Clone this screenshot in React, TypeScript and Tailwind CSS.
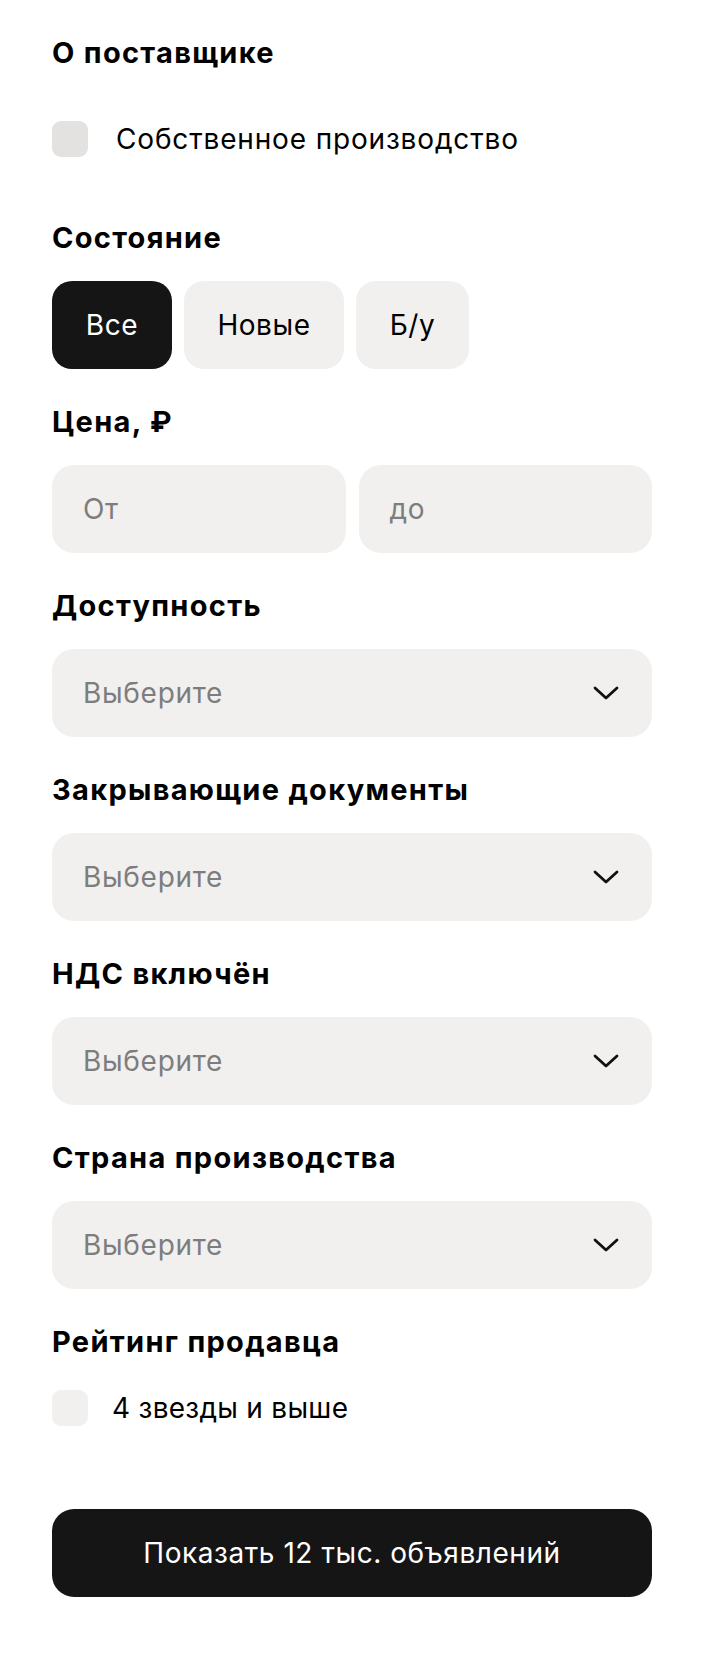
import React, { useState } from 'react'

const FONT = "font-['Inter',_'Liberation_Sans',_sans-serif]"

function Heading({ children }: { children: React.ReactNode }) {
  return (
    <h3 className="h-[32px] whitespace-nowrap text-[29px] font-bold leading-[32px] tracking-[0.045em] text-black">
      {children}
    </h3>
  )
}

function Chevron() {
  return (
    <svg width="26" height="14" viewBox="0 0 26 14" fill="none" aria-hidden="true">
      <path d="M2 2l11 10L24 2" stroke="#111" strokeWidth="2.8" strokeLinecap="round" strokeLinejoin="round" />
    </svg>
  )
}

// filter dropdowns all share the same closed state
function SelectBox() {
  return (
    <button
      type="button"
      className="flex h-[88px] w-full items-center justify-between rounded-[22px] bg-[#f1f0ee] pl-[31px] pr-[33px] text-left"
    >
      <span className="text-[28px] leading-none tracking-[0.025em] text-[#7d7d7d]">Выберите</span>
      <Chevron />
    </button>
  )
}

function Section({ title, children }: { title: string; children: React.ReactNode }) {
  return (
    <section className="flex flex-col gap-[27px]">
      <Heading>{title}</Heading>
      {children}
    </section>
  )
}

const conditions = [
  { label: 'Все', w: 'w-[120px]' },
  { label: 'Новые', w: 'w-[160px]' },
  { label: 'Б/у', w: 'w-[113px]' },
]

export default function App() {
  const [cond, setCond] = useState('Все')

  return (
    <div className={`${FONT} min-h-[1658px] w-[722px] bg-white pl-[52px] pt-[37px] text-black`}>
      <div className="flex w-[600px] flex-col">
        <Heading>О поставщике</Heading>

        <label className="mt-[52px] flex items-center gap-[28px]">
          <span className="h-[36px] w-[36px] rounded-[9px] bg-[#e3e2e0]" />
          <span className="text-[28px] leading-none tracking-[0.03em]">Собственное производство</span>
        </label>

        <div className="mt-[65px] flex flex-col gap-[37px]">
          <Section title="Состояние">
            <div className="flex gap-[12px]">
              {conditions.map((c) => (
                <button
                  key={c.label}
                  type="button"
                  onClick={() => setCond(c.label)}
                  className={
                    c.label === cond
                      ? `${c.w} h-[88px] rounded-[20px] bg-[#151515] text-[28px] tracking-[0.02em] text-white`
                      : `${c.w} h-[88px] rounded-[20px] bg-[#f1f0ee] text-[28px] tracking-[0.02em] text-black`
                  }
                >
                  {c.label}
                </button>
              ))}
            </div>
          </Section>

          <Section title="Цена, ₽">
            <div className="grid grid-cols-2 gap-[13px]">
              <div className="flex h-[88px] items-center rounded-[22px] bg-[#f1f0ee] pl-[31px] text-[28px] tracking-[0.02em] text-[#7d7d7d]">
                От
              </div>
              <div className="flex h-[88px] items-center rounded-[22px] bg-[#f1f0ee] pl-[31px] text-[28px] tracking-[0.02em] text-[#7d7d7d]">
                до
              </div>
            </div>
          </Section>

          <Section title="Доступность">
            <SelectBox />
          </Section>

          <Section title="Закрывающие документы">
            <SelectBox />
          </Section>

          <Section title="НДС включён">
            <SelectBox />
          </Section>

          <Section title="Страна производства">
            <SelectBox />
          </Section>

          <section className="flex flex-col">
            <Heading>Рейтинг продавца</Heading>
            <label className="mt-[32px] flex items-center gap-[24px]">
              <span className="h-[36px] w-[36px] rounded-[9px] bg-[#f1f0ee]" />
              <span className="text-[28px] leading-none tracking-[0.01em]">4 звезды и выше</span>
            </label>
          </section>
        </div>

        <button
          type="button"
          className="mt-[83px] h-[88px] w-full rounded-[22px] bg-[#151515] text-[28px] tracking-[0.02em] text-white"
        >
          Показать 12 тыс. объявлений
        </button>
      </div>
    </div>
  )
}
